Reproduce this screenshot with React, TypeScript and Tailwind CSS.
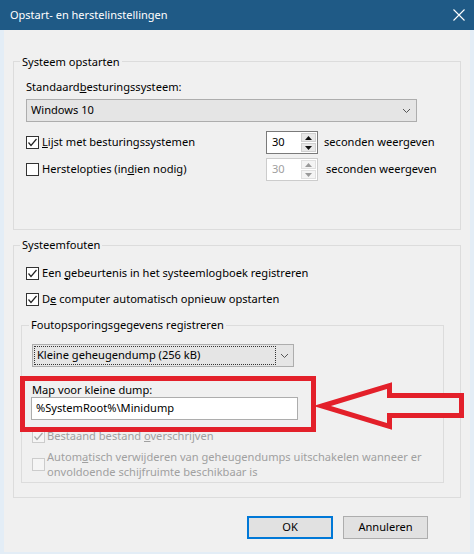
import React from "react";

const FONT = { fontFamily: '"Noto Sans", "Liberation Sans", sans-serif' };

const Check: React.FC<{ checked?: boolean; disabled?: boolean }> = ({ checked, disabled }) => (
  <span
    className={`flex items-center justify-center w-[13px] h-[13px] shrink-0 border ${
      disabled ? "border-[#cccccc] bg-[#f5f5f5]" : "border-[#333333] bg-white"
    }`}>
    {checked && (
      <svg width="11" height="11" viewBox="0 0 11 11">
        <path d="M1.5 5.5 L4 8.5 L9.5 2" fill="none" stroke={disabled ? "#a8a8a8" : "#222"} strokeWidth="1.2" />
      </svg>
    )}
  </span>
);

const Chevron = () => (
  <svg width="9" height="6" viewBox="0 0 9 6">
    <path d="M1 1 L4.5 4.5 L8 1" fill="none" stroke="#555" strokeWidth="1" />
  </svg>
);

const Spin: React.FC<{ disabled?: boolean }> = ({ disabled }) => {
  const arrow = disabled ? "#9a9a9a" : "#111";
  return (
    <div className={`flex w-[52px] h-[23px] border ${disabled ? "border-[#cccccc]" : "border-[#7a7a7a]"} bg-white`}>
      <div className={`flex-1 flex items-center pl-[5px] ${disabled ? "text-[#a0a0a0]" : "text-black"}`}>30</div>
      <div className="flex flex-col justify-center gap-[1px] pr-[1px] w-[16px]">
        <div className={`h-[9px] flex items-center justify-center border ${disabled ? "border-[#e0e0e0] bg-[#f4f4f4]" : "border-[#d0d0d0] bg-[#e8e8e8]"}`}>
          <svg width="7" height="4" viewBox="0 0 7 4"><path d="M0 4 L3.5 0 L7 4 Z" fill={arrow} /></svg>
        </div>
        <div className={`h-[9px] flex items-center justify-center border ${disabled ? "border-[#e0e0e0] bg-[#f4f4f4]" : "border-[#d0d0d0] bg-[#e8e8e8]"}`}>
          <svg width="7" height="4" viewBox="0 0 7 4"><path d="M0 0 L3.5 4 L7 0 Z" fill={arrow} /></svg>
        </div>
      </div>
    </div>
  );
};

export default function App() {
  return (
    <div className="relative w-[474px] h-[554px] flex flex-col bg-[#f0f0f0] text-[11.1px] text-black" style={FONT}>
      {/* title bar */}
      <div className="h-[30px] shrink-0 flex items-center justify-between pl-[10px] pr-[9px] bg-[#1f5a86] text-white">
        <span className="text-[11px]">Opstart- en herstelinstellingen</span>
        <svg width="12" height="12" viewBox="0 0 12 12">
          <path d="M0.5 0.5 L11.5 11.5 M11.5 0.5 L0.5 11.5" stroke="#fff" strokeWidth="1.1" />
        </svg>
      </div>

      <div className="flex-1 flex flex-col border-x-[4px] border-b-[2px] border-[#e3edf6] px-[9px]">
        {/* Systeem opstarten */}
        <div className="mt-[31px] h-[169px] border border-[#dcdcdc] pl-[12px]">
          <div className="-mt-[8px] -ml-[6px] px-[2px] w-fit leading-[16px] bg-[#f0f0f0]">Systeem opstarten</div>
          <div className="mt-[9px] leading-[16px]">
            Standaard<u>b</u>esturingssysteem:
          </div>
          <div className="mt-[4px] h-[23px] w-[391px] flex items-center justify-between pl-[4px] pr-[5px] bg-[#e5e5e5] border border-[#adadad]">
            <span>Windows 10</span>
            <Chevron />
          </div>
          <div className="mt-[9px] h-[23px] flex items-center">
            <div className="w-[240px] flex items-center gap-[3px]">
              <Check checked />
              <span>
                <u>L</u>ijst met besturingssystemen
              </span>
            </div>
            <Spin />
            <span className="ml-[6px]">seconden weergeven</span>
          </div>
          <div className="mt-[4px] h-[23px] flex items-center">
            <div className="w-[240px] flex items-center gap-[3px]">
              <Check />
              <span>
                Herstelopties (in<u>d</u>ien nodig)
              </span>
            </div>
            <Spin disabled />
            <span className="ml-[8px]">seconden weergeven</span>
          </div>
        </div>

        {/* Systeemfouten */}
        <div className="mt-[15px] h-[253px] border border-[#dcdcdc] pl-[12px]">
          <div className="-mt-[9px] -ml-[6px] px-[2px] w-fit leading-[16px] bg-[#f0f0f0]">Systeemfouten</div>
          <div className="mt-[12px] h-[16px] flex items-center gap-[3px]">
            <Check checked />
            <span>
              Een <u>g</u>ebeurtenis in het systeemlogboek registreren
            </span>
          </div>
          <div className="mt-[10px] h-[16px] flex items-center gap-[3px]">
            <Check checked />
            <span>
              D<u>e</u> computer automatisch opnieuw opstarten
            </span>
          </div>

          <div className="mt-[18px] -ml-[5px] w-[423px] h-[158px] border border-[#dcdcdc] pl-[10px]">
            <div className="-mt-[9px] -ml-[3px] px-[2px] w-fit leading-[16px] bg-[#f0f0f0]">
              Foutopsporingsgegevens registreren
            </div>
            <div className="mt-[11px] h-[23px] w-[262px] flex items-center bg-[#e5e5e5] border border-[#adadad]">
              <div className="ml-[1px] h-[19px] w-[242px] flex items-center pl-[2px] border border-dotted border-[#333]">
                Kleine geheugendump (256 kB)
              </div>
              <div className="flex-1 flex justify-center">
                <Chevron />
              </div>
            </div>
            <div className="mt-[15px] leading-[15px]">Map voor kleine dump:</div>
            <div className="-ml-[1px] h-[23px] w-[267px] flex items-center pl-[4px] bg-white border border-[#adadad]">
              %SystemRoot%\Minidump
            </div>
            <div className="mt-[8px] h-[16px] flex items-center gap-[2px] text-[#a0a0a0]">
              <Check checked disabled />
              <span>
                Bestaand bestand <u>o</u>verschrijven
              </span>
            </div>
            <div className="mt-[5px] flex items-center gap-[2px] text-[#a0a0a0]">
              <Check disabled />
              <span className="leading-[15px] whitespace-nowrap">
                Autom<u>a</u>tisch verwijderen van geheugendumps uitschakelen wanneer er
                <br />
                onvoldoende schijfruimte beschikbaar is
              </span>
            </div>
          </div>
        </div>

        {/* buttons */}
        <div className="mt-[18px] mr-[33px] flex justify-end gap-[10px]">
          <button className="w-[86px] h-[23px] bg-[#e1e1e1] border-2 border-[#0078d7]">OK</button>
          <button className="w-[85px] h-[23px] bg-[#e1e1e1] border border-[#adadad]">Annuleren</button>
        </div>
      </div>

      {/* annotation overlay */}
      <div className="absolute left-[20px] top-[376px] w-[296px] h-[56px] border-[5px] border-[#e3202a]" />
      <svg className="absolute left-0 top-0 pointer-events-none" width="474" height="554" viewBox="0 0 474 554">
        <polygon
          points="322,406 389.5,385.5 389.5,395.5 461.5,395.5 461.5,415.5 389.5,415.5 389.5,426.5"
          fill="#f0f0f0"
          stroke="#e3202a"
          strokeWidth="5"
        />
      </svg>
    </div>
  );
}
